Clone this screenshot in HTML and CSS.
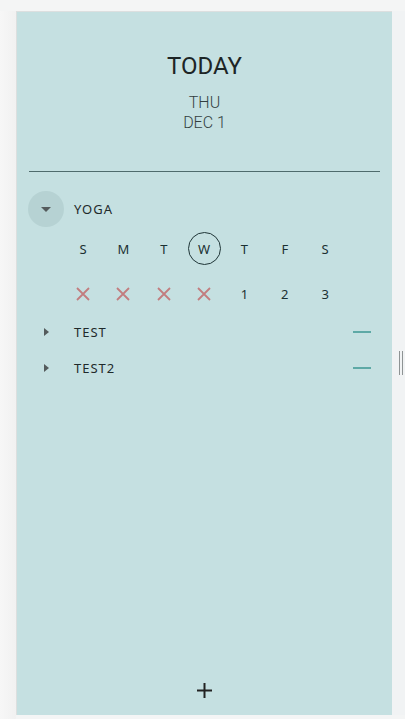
FILE: index.html
```html
<!DOCTYPE html>
<html>
<head>
<meta charset="utf-8">
<link rel="stylesheet" href="styles.css">
</head>
<body>
<div class="app">
  <div class="gutter"></div>
  <section class="panel">
    <header class="head">
      <h1 class="title">TODAY</h1>
      <div class="date">THU<br>DEC 1</div>
    </header>
    <hr class="divider">
    <ul class="habits">
      <li class="habit open">
        <div class="row">
          <span class="toggle circle"><svg width="10" height="5" viewBox="0 0 10 5"><path d="M0 0H10L5 5Z" fill="#545b5c"/></svg></span>
          <span class="name">YOGA</span>
        </div>
        <div class="week">
          <span class="day">S</span><span class="day">M</span><span class="day">T</span><span class="day today">W</span><span class="day">T</span><span class="day">F</span><span class="day">S</span>
        </div>
        <div class="week marks">
          <span class="mark"><svg width="14" height="14" viewBox="0 0 14 14"><path d="M1 1L13 13M13 1L1 13" stroke="#c27d7f" stroke-width="1.8"/></svg></span>
          <span class="mark"><svg width="14" height="14" viewBox="0 0 14 14"><path d="M1 1L13 13M13 1L1 13" stroke="#c27d7f" stroke-width="1.8"/></svg></span>
          <span class="mark"><svg width="14" height="14" viewBox="0 0 14 14"><path d="M1 1L13 13M13 1L1 13" stroke="#c27d7f" stroke-width="1.8"/></svg></span>
          <span class="mark"><svg width="14" height="14" viewBox="0 0 14 14"><path d="M1 1L13 13M13 1L1 13" stroke="#c27d7f" stroke-width="1.8"/></svg></span>
          <span class="mark num">1</span><span class="mark num">2</span><span class="mark num">3</span>
        </div>
      </li>
      <li class="habit">
        <div class="row">
          <span class="toggle"><svg width="5" height="8" viewBox="0 0 5 8"><path d="M0 0L5 4L0 8Z" fill="#545b5c"/></svg></span>
          <span class="name">TEST</span>
          <span class="dash"></span>
        </div>
      </li>
      <li class="habit">
        <div class="row">
          <span class="toggle"><svg width="5" height="8" viewBox="0 0 5 8"><path d="M0 0L5 4L0 8Z" fill="#545b5c"/></svg></span>
          <span class="name">TEST2</span>
          <span class="dash"></span>
        </div>
      </li>
    </ul>
    <footer class="foot">
      <svg width="15" height="15" viewBox="0 0 15 15"><path d="M7.5 0V15M0 7.5H15" stroke="#222" stroke-width="2"/></svg>
    </footer>
  </section>
  <div class="side">
    <span class="handle"></span>
  </div>
</div>
</body>
</html>
```

FILE: styles.css
```css
html, body {
  margin: 0;
  padding: 0;
}
body {
  background: #f4f5f5;
  font-family: "Noto Sans", Roboto, sans-serif;
}
.app {
  display: flex;
  height: 719px;
  padding-top: 11px;
  box-sizing: border-box;
}
.gutter {
  width: 16px;
  background: linear-gradient(to right, #f7f7f7, #f1f1f1);
}
.panel {
  width: 376px;
  height: 704px;
  box-sizing: border-box;
  background: #c5e0e1;
  border-left: 1px solid #dcdfdf;
  border-top: 1px solid #dcdfdf;
  display: flex;
  flex-direction: column;
  padding: 40px 12px 0 12px;
}
.head {
  text-align: center;
}
.title {
  margin: 0;
  font-family: Roboto, sans-serif;
  font-weight: 400;
  font-size: 24px;
  line-height: 28px;
  color: #1d2526;
}
.date {
  margin-top: 13px;
  font-family: Roboto, sans-serif;
  font-weight: 300;
  font-size: 16px;
  line-height: 20px;
  color: #333e3f;
}
.divider {
  margin: 38px 0 0 0;
  border: 0;
  height: 1px;
  background: #4f6b6c;
}
.habits {
  list-style: none;
  margin: 19px 0 0 0;
  padding: 0;
  flex: 1;
}
.row {
  display: flex;
  align-items: center;
  height: 36px;
}
.toggle {
  width: 36px;
  height: 36px;
  margin-left: -1px;
  display: flex;
  align-items: center;
  justify-content: center;
  flex: none;
}
.toggle.circle {
  border-radius: 50%;
  background: #b6d2d3;
}
.name {
  margin-left: 10px;
  font-size: 13px;
  letter-spacing: 1px;
  color: #1f2a2b;
  flex: 1;
}
.dash {
  width: 18px;
  height: 2px;
  background: #5ea9a6;
  margin-right: 9px;
}
.week {
  display: grid;
  grid-template-columns: repeat(7, 40.33px);
  margin-left: 34px;
  margin-top: 5px;
}
.week.marks {
  margin-top: 11px;
  margin-bottom: 3px;
}
.day, .mark {
  height: 34px;
  display: flex;
  align-items: center;
  justify-content: center;
  font-size: 13px;
  color: #1b3032;
}
.day.today {
  width: 33px;
  height: 33px;
  box-sizing: border-box;
  justify-self: center;
  border: 1px solid #1f3537;
  border-radius: 50%;
}
.foot {
  height: 32px;
  display: flex;
  justify-content: center;
  align-items: flex-start;
}
.side {
  flex: 1;
  height: 704px;
  background: #f1f3f4;
  display: flex;
  align-items: center;
  padding-left: 7px;
}
.handle {
  width: 2px;
  height: 24px;
  border-left: 1.5px solid #8e9394;
  border-right: 1.5px solid #8e9394;
}
```
